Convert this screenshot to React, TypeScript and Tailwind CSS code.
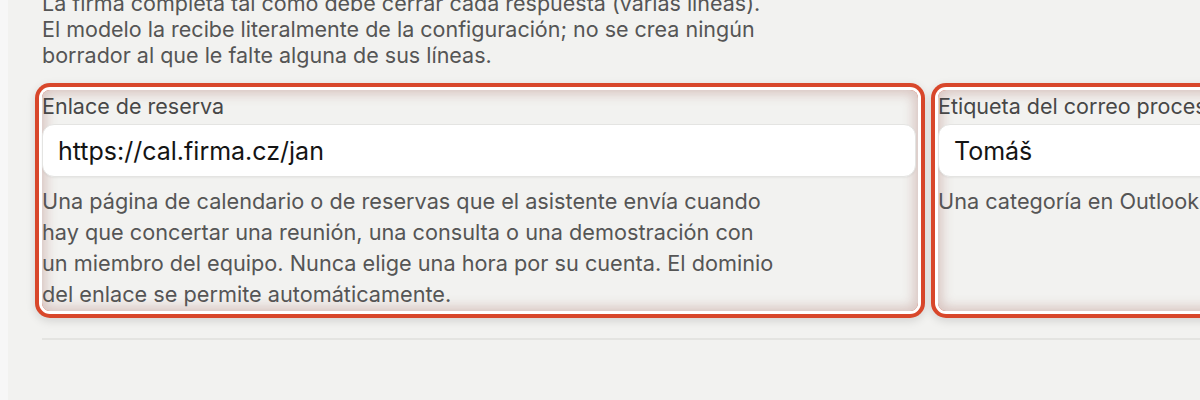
import React from "react";

type Field = {
  label: string;
  value: string;
  help: string;
};

const fields: Field[] = [
  {
    label: "Enlace de reserva",
    value: "https://cal.firma.cz/jan",
    help: "Una página de calendario o de reservas que el asistente envía cuando hay que concertar una reunión, una consulta o una demostración con un miembro del equipo. Nunca elige una hora por su cuenta. El dominio del enlace se permite automáticamente.",
  },
  {
    label: "Etiqueta del correo procesado",
    value: "Tomáš",
    help: "Una categoría en Outlook para los correos ya procesados.",
  },
];

const intro = [
  "La firma completa tal como debe cerrar cada respuesta (varias líneas).",
  "El modelo la recibe literalmente de la configuración; no se crea ningún",
  "borrador al que le falte alguna de sus líneas.",
];

function HighlightedField({ field }: { field: Field }) {
  return (
    <div className="flex h-[221px] flex-col rounded-[8px] shadow-[0_0_0_3px_#ffffff,0_0_0_7px_#d8472b,0_3px_10px_7px_rgba(0,0,0,0.13),inset_0_0_12px_4px_rgba(150,80,70,0.28)]">
      <label className="pt-[2px] text-[21.5px] leading-[28px] text-[#474747]">
        {field.label}
      </label>
      <input
        readOnly
        value={field.value}
        className="mt-[4px] h-[53px] w-[874px] rounded-[12px] border border-[#e4e4e2] bg-white pl-[15px] text-[25px] text-[#141414] shadow-[0_1px_2px_rgba(0,0,0,0.05)] outline-none"
      />
      <p className="mt-[9px] max-w-[735px] text-[21.7px] leading-[31px] text-[#555555]">
        {field.help}
      </p>
    </div>
  );
}

export default function App() {
  return (
    <div
      className="flex h-[400px] w-[1200px] overflow-hidden bg-[#f2f2f0]"
      style={{ fontFamily: "Inter, 'Noto Sans', sans-serif" }}
    >
      <div className="w-[8px] shrink-0 bg-[#f7f7f7]" />
      <div className="flex shrink-0 flex-col pl-[34px]">
        <p className="-mt-[10px] text-[21.5px] leading-[26px] text-[#555555]">
          {intro.map((line) => (
            <span key={line} className="block whitespace-nowrap">
              {line}
            </span>
          ))}
        </p>
        <div className="mt-[22px] grid grid-cols-[876px_876px] gap-[20px]">
          {fields.map((f) => (
            <HighlightedField key={f.label} field={f} />
          ))}
        </div>
        <div className="mt-[27px] h-[2px] w-[1772px] bg-[#e4e4e1]" />
      </div>
    </div>
  );
}
